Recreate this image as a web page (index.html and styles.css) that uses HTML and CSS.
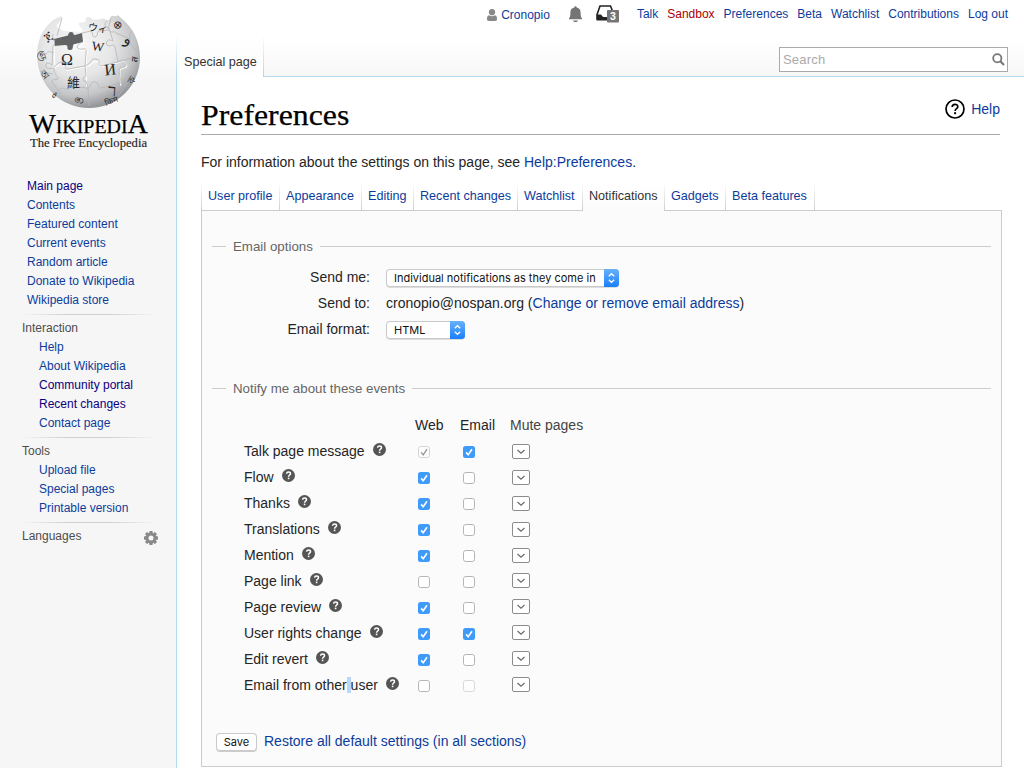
FILE: index.html
```html
<!DOCTYPE html>
<html lang="en">
<head>
<meta charset="utf-8">
<title>Preferences - Wikipedia</title>
<link rel="stylesheet" href="styles.css">
</head>
<body>
<svg class="defs" width="0" height="0" aria-hidden="true">
  <defs>
    <linearGradient id="blue" x1="0" y1="0" x2="0" y2="1"><stop offset="0" stop-color="#69b1fa"/><stop offset="1" stop-color="#1a7ffa"/></linearGradient>
    <symbol id="q" viewBox="0 0 13 13"><circle cx="6.5" cy="6.5" r="6.5" fill="#555"/><path d="M4.6 4.7C4.7 2.5 8.5 2.5 8.5 4.7C8.5 6 6.7 6 6.6 7.7" fill="none" stroke="#fff" stroke-width="1.5"/><rect x="5.8" y="8.6" width="1.6" height="1.6" fill="#fff"/></symbol>
    <symbol id="on" viewBox="0 0 12 12"><rect width="12" height="12" rx="2.5" fill="#3f9bf9"/><path d="M3.1 6.4L5.2 8.8L9 3.2" fill="none" stroke="#fff" stroke-width="1.6"/></symbol>
    <symbol id="off" viewBox="0 0 12 12"><rect x=".5" y=".5" width="11" height="11" rx="2.3" fill="#fff" stroke="#b5b5b5"/></symbol>
    <symbol id="dim" viewBox="0 0 12 12"><rect x=".5" y=".5" width="11" height="11" rx="2.3" fill="#fdfdfd" stroke="#d9d9d9"/></symbol>
    <symbol id="dimon" viewBox="0 0 12 12"><rect x=".5" y=".5" width="11" height="11" rx="2.3" fill="#fdfdfd" stroke="#d4d4d4"/><path d="M3.1 6.4L5.2 8.8L9 3.2" fill="none" stroke="#999" stroke-width="1.4"/></symbol>
    <symbol id="mute" viewBox="0 0 18 15"><rect x=".5" y=".5" width="17" height="14" rx="1.5" fill="#fff" stroke="#8c8c8c"/><path d="M5.5 6L9 9.2L12.5 6" fill="none" stroke="#666" stroke-width="1.1"/></symbol>
    <symbol id="updown" viewBox="0 0 15 18"><path d="M0 0H11.5A3.5 3.5 0 0 1 15 3.5V14.5A3.5 3.5 0 0 1 11.5 18H0Z" fill="url(#blue)"/><path d="M4.8 7.2L7.5 4.7L10.2 7.2M4.8 10.8L7.5 13.3L10.2 10.8" fill="none" stroke="#fff" stroke-width="1.3"/></symbol>
  </defs>
</svg>
<div class="page">
  <aside class="sidebar">
    <svg class="logo" width="176" height="160" viewBox="0 0 176 160">
      <defs>
        <radialGradient id="globe" cx=".4" cy=".32" r=".68"><stop offset="0" stop-color="#f8f8f8"/><stop offset=".5" stop-color="#e6e6e7"/><stop offset=".8" stop-color="#c5c6c8"/><stop offset="1" stop-color="#949699"/></radialGradient>
      </defs>
      <path d="M62 16C58 17 54 19 50 23C41 31 37 43 37 56C38 86 61 108 89 108C118 108 140 85 140 57C140 42 133 27 121 18L118 15C116 18 113 15 111 16L109 20C106 21 104 17 101 19L94 20C91 20 92 17 88 17C84 18 87 21 85 22L79 23C78 27 84 28 82 32L63 31C61 28 56 29 57 25C59 22 62 20 62 16Z" fill="url(#globe)"/>
      <path d="M54 39L66 36C70 36 67 32 71 32C75 32 72 35 75 35L82 33L83 42L75 44C71 44 75 50 70 50C65 50 70 45 65 45L54 46Z" fill="#626365"/>
      <g fill="none" stroke="#fff" stroke-width="1.1" transform="translate(.8 .8)"><path d="M53 39L54 66M83 42C78 45 76 49 80 50C84 49 87 47 86 53L85 66C94 63 91 60 96 61C102 61 96 66 101 66L118 62M54 67C58 64 60 62 63 65C67 69 64 71 69 69L85 66L86 87M118 62C123 58 126 61 126 65C125 69 120 66 119 70L120 85"/></g>
      <g fill="none" stroke="#b4b5b7" stroke-width=".8">
        <path d="M53 34C51 39 57 42 53 46L52 65C48 62 45 62 46 67C48 70 51 67 54 69C54 75 59 77 58 79C55 80 53 78 52 82L61 94M83 42C77 44 76 48 79 49C83 50 87 46 86 53L85 66C94 62 90 58 96 59C103 60 96 65 101 66L118 62M54 67C58 64 60 60 64 63C67 67 63 70 68 69L85 66L86 76C82 77 82 82 86 81L88 88C93 86 89 81 95 82C101 83 96 88 101 88L121 83M107 21C102 25 107 28 109 28L113 41C108 38 105 42 107 45C110 48 114 42 115 47L118 62C123 58 127 61 126 65C125 69 120 66 119 70L121 83C125 80 128 82 126 85L118 96M82 33L91 31C94 34 91 37 95 37C99 36 96 32 99 31L109 30C111 34 114 30 116 33L130 39M37 55C41 53 42 56 46 54C49 49 52 54 54 52M59 90C63 86 64 90 68 89C71 86 66 84 71 82C77 81 73 86 77 87L88 88L89 106M118 62C126 60 130 57 138 59M40 71L53 74M62 18L57 36M111 18L108 29M132 31C128 35 131 40 130 43L137 52M121 83L131 78"/>
      </g>
      <g class="glyphs">
        <text x="61" y="65" font-size="16">Ω</text><text x="92" y="51" font-size="13" transform="rotate(8 98 46)">W</text><text x="104.500" y="75" font-size="16" transform="rotate(-6 110 70)">И</text>
        <text class="cjk" x="67" y="87" font-size="13">維</text><text x="108" y="96" font-size="17" transform="rotate(5 112 90)">ר</text>
        <text x="88" y="31" font-size="10" transform="rotate(8 94 27)">ウィ</text><text x="44" y="40" font-size="12" transform="rotate(-35 48 36)">ጀ</text><text x="113" y="28" font-size="11" transform="rotate(38 117 25)">⊕</text><text x="124" y="44" font-size="15" transform="rotate(15 128 40)">و</text><text x="40" y="58" font-size="10" transform="rotate(75 44 54)">ஞ</text><text x="40" y="79" font-size="10" transform="rotate(48 45 75)">অ</text><text x="53" y="99" font-size="10" transform="rotate(35 57 95)">ಕಿ</text><text x="74" y="103" font-size="11" transform="rotate(8 80 99)">ဇာ</text><text x="131" y="63" font-size="10" transform="rotate(-80 134 59)">ส</text><text x="128" y="84" font-size="10" transform="rotate(-60 132 80)">ক</text><text x="105" y="104" font-size="8" transform="rotate(-20 110 101)">किम</text>
      </g>
      <text class="wordmark" x="29" y="133" textLength="119" lengthAdjust="spacingAndGlyphs"><tspan font-size="27">W</tspan><tspan font-size="19">IKIPEDI</tspan><tspan font-size="27">A</tspan></text>
      <text class="tagline" x="30" y="147" textLength="117" lengthAdjust="spacingAndGlyphs">The Free Encyclopedia</text>
    </svg>
    <nav class="portal main"><a class="visited">Main page</a><a>Contents</a><a>Featured content</a><a>Current events</a><a>Random article</a><a>Donate to Wikipedia</a><a>Wikipedia store</a></nav>
    <nav class="portal"><h3>Interaction</h3><a>Help</a><a>About Wikipedia</a><a class="visited">Community portal</a><a class="visited">Recent changes</a><a>Contact page</a></nav>
    <nav class="portal"><h3>Tools</h3><a>Upload file</a><a>Special pages</a><a>Printable version</a></nav>
    <nav class="portal"><h3>Languages
      <svg class="gear" width="14" height="14" viewBox="-7 -7 14 14"><circle r="3.9" fill="none" stroke="#888" stroke-width="2.8"/><g fill="#888"><path id="tooth" d="M-1.9 -4.8L-1.4 -7H1.4L1.9 -4.8ZM-1.9 4.8L-1.4 7H1.4L1.9 4.8Z"/><use href="#tooth" transform="rotate(45)"/><use href="#tooth" transform="rotate(90)"/><use href="#tooth" transform="rotate(135)"/></g></svg></h3></nav>
  </aside>
  <div class="body">
    <header class="header">
      <nav class="personal">
        <svg class="user" width="10" height="12" viewBox="0 0 10 12"><circle cx="5" cy="3.2" r="3.1" fill="#888"/><path d="M2 6.3C4 7.7 6 7.7 8 6.3C9.6 6.8 10 8 10 9.5C10 11.3 9.5 12 8 12H2C.5 12 0 11.3 0 9.5C0 8 .4 6.8 2 6.3Z" fill="#888"/></svg>
        <a class="name">Cronopio</a>
        <svg class="bell" width="13" height="17" viewBox="0 0 13 17"><path d="M5.3 1.5C5.3 -.2 7.7 -.2 7.7 1.5C10.6 2 11.6 4.2 11.6 6.5C11.6 10 12 11.3 13 12.2V13.3H0V12.2C1 11.3 1.400 10 1.400 6.5C1.400 4.2 2.400 2 5.300 1.500ZM4 14.400H9C8.500 16.500 4.500 16.500 4 14.400Z" fill="#757575"/></svg>
        <svg class="tray" width="24" height="18" viewBox="0 0 24 18"><path d="M.9 10L4 1H14.500L16.500 6" fill="none" stroke="#222" stroke-width="1.600"/><path d="M.2 9.500H4.500C5.500 9.500 6 11.500 7.500 12H12V15.500H1.500Q.2 15.500 .2 14Z" fill="#222"/><rect x="11" y="5" width="12" height="12.500" rx="1" fill="#757575"/><text x="17" y="14.900" text-anchor="middle" class="count">3</text></svg>
        <a>Talk</a><a class="new">Sandbox</a><a>Preferences</a><a>Beta</a><a>Watchlist</a><a>Contributions</a><a>Log out</a>
      </nav>
      <div class="headrow">
        <div class="viewtab">Special page</div>
        <div class="search"><span>Search</span><svg width="13" height="13" viewBox="0 0 13 13"><circle cx="5.300" cy="5.300" r="4.100" fill="none" stroke="#777" stroke-width="1.800"/><path d="M8.300 8.300L12 12" stroke="#777" stroke-width="2.200"/></svg></div>
      </div>
    </header>
    <main class="content">
      <div class="titlebar"><h1><span>Preferences</span></h1>
        <a class="help"><svg width="20" height="20" viewBox="0 0 20 20"><circle cx="10" cy="10" r="9" fill="none" stroke="#000" stroke-width="1.700"/><path d="M7.200 8C7.200 4.500 12.800 4.500 12.800 7.800C12.800 9.700 10.200 9.600 10.100 12" fill="none" stroke="#000" stroke-width="1.700"/><rect x="9.100" y="13.200" width="2" height="2"/></svg>Help</a></div>
      <p class="intro">For information about the settings on this page, see <a>Help:Preferences</a>.</p>
      <nav class="tabs"><a>User profile</a><a>Appearance</a><a>Editing</a><a>Recent changes</a><a>Watchlist</a><a class="selected">Notifications</a><a>Gadgets</a><a>Beta features</a></nav>
      <section class="panel">
        <h2 class="legend">Email options</h2>
        <div class="form">
          <label>Send me:</label><div><span class="select wide"><span class="val1">Individual notifications as they come in</span><svg width="15" height="18"><use href="#updown"/></svg></span></div>
          <label>Send to:</label><div><span class="mail">cronopio@nospan.org (<a>Change or remove email address</a>)</span></div>
          <label>Email format:</label><div><span class="select short"><span class="val2">HTML</span><svg width="15" height="18"><use href="#updown"/></svg></span></div>
        </div>
        <h2 class="legend events">Notify me about these events</h2>
        <div class="cols"><span></span><span>Web</span><span>Email</span><span class="soft">Mute pages</span></div>
        <div class="row"><span>Talk page message<svg class="q"><use href="#q"/></svg></span><svg class="cb"><use href="#dimon"/></svg><svg class="cb"><use href="#on"/></svg><svg class="mute"><use href="#mute"/></svg></div>
        <div class="row"><span>Flow<svg class="q"><use href="#q"/></svg></span><svg class="cb"><use href="#on"/></svg><svg class="cb"><use href="#off"/></svg><svg class="mute"><use href="#mute"/></svg></div>
        <div class="row"><span>Thanks<svg class="q"><use href="#q"/></svg></span><svg class="cb"><use href="#on"/></svg><svg class="cb"><use href="#off"/></svg><svg class="mute"><use href="#mute"/></svg></div>
        <div class="row"><span>Translations<svg class="q"><use href="#q"/></svg></span><svg class="cb"><use href="#on"/></svg><svg class="cb"><use href="#off"/></svg><svg class="mute"><use href="#mute"/></svg></div>
        <div class="row"><span>Mention<svg class="q"><use href="#q"/></svg></span><svg class="cb"><use href="#on"/></svg><svg class="cb"><use href="#off"/></svg><svg class="mute"><use href="#mute"/></svg></div>
        <div class="row up"><span>Page link<svg class="q"><use href="#q"/></svg></span><svg class="cb"><use href="#off"/></svg><svg class="cb"><use href="#off"/></svg><svg class="mute"><use href="#mute"/></svg></div>
        <div class="row up"><span>Page review<svg class="q"><use href="#q"/></svg></span><svg class="cb"><use href="#on"/></svg><svg class="cb"><use href="#off"/></svg><svg class="mute"><use href="#mute"/></svg></div>
        <div class="row up"><span>User rights change<svg class="q"><use href="#q"/></svg></span><svg class="cb"><use href="#on"/></svg><svg class="cb"><use href="#on"/></svg><svg class="mute"><use href="#mute"/></svg></div>
        <div class="row up"><span>Edit revert<svg class="q"><use href="#q"/></svg></span><svg class="cb"><use href="#on"/></svg><svg class="cb"><use href="#off"/></svg><svg class="mute"><use href="#mute"/></svg></div>
        <div class="row up"><span>Email from other<mark> </mark>user<svg class="q"><use href="#q"/></svg></span><svg class="cb"><use href="#off"/></svg><svg class="cb"><use href="#dim"/></svg><svg class="mute"><use href="#mute"/></svg></div>
        <div class="actions"><span class="save">Save</span><a>Restore all default settings (in all sections)</a></div>
      </section>
    </main>
  </div>
</div>
</body>
</html>
```
FILE: styles.css
```css
* { box-sizing: border-box; }
body { margin: 0; overflow: hidden; font-family: "Liberation Sans", Arial, sans-serif; font-size: 14px; color: #252525; background: #f6f6f6; }
svg { display: block; flex: none; }
.defs { position: absolute; }
a { color: #0b3c9c; white-space: nowrap; }
.page { display: flex; width: 1024px; height: 768px; background: linear-gradient(#fff 0, #fff 38px, #f6f6f6 80px); }
.sidebar { width: 177px; flex: none; border-right: 1px solid; border-image: linear-gradient(#a7d7f900 36px, #b3d9ef 76px) 1; font-size: 12px; }
.logo { width: 176px; height: 160px; }
.glyphs { font-family: "Liberation Serif", "DejaVu Sans", "Noto Sans CJK JP", serif; fill: #252525; }
.cjk { font-family: "Noto Sans CJK TC", sans-serif; }
.wordmark { font-family: "Liberation Serif", serif; fill: #000; stroke: #000; stroke-width: .25px; }
.tagline { font-family: "Liberation Serif", serif; font-size: 13px; fill: #222; stroke: #222; stroke-width: .15px; }
.portal { display: flex; flex-direction: column; line-height: 19px; margin-left: 22px; width: 134px; padding-top: 4px; }
.portal + .portal { margin-top: 4px; border-top: 1px solid; border-image: linear-gradient(to right, #d8d8d800, #d0d0d0 33%, #d0d0d0 66%, #d8d8d800) 1; }
.portal a { padding-left: 17px; }
.portal.main { padding-top: 17px; }
.portal.main a { padding-left: 5px; }
.portal h3 { display: flex; justify-content: space-between; align-items: center; margin: 0 -3px 0 0; font-size: 12px; font-weight: normal; color: #4d4d4d; }
.gear { margin: 2px 1px 0 0; }
.visited { color: #0b0080; }
.body { flex: 1; min-width: 0; display: flex; flex-direction: column; }
.header { height: 77px; display: flex; flex-direction: column; justify-content: space-between; }
.personal { height: 28px; display: flex; align-items: center; justify-content: flex-end; gap: 9px; padding-right: 16px; font-size: 12px; }
.user { margin: 1px -5px 0 0; }
.name { padding-top: 2px; }
.bell { margin: 0 5px 0 10px; }
.tray { margin-right: 8px; }
.count { font: bold 10.5px "Liberation Sans", sans-serif; fill: #fff; }
.new { color: #a00; }
.headrow { display: flex; height: 41px; }
.viewtab { width: 87px; flex: none; padding: 18px 0 0 7px; line-height: 16px; font-size: 12.6px; color: #333; background: linear-gradient(#fff0, #fff 40px); border-right: 1px solid; border-image: linear-gradient(#a7d7f900, #a9d5ee) 1; white-space: nowrap; }
.headrow::after { content: ""; flex: none; width: 16px; border-bottom: 1px solid #b3d9ef; }
.search { flex: 1; padding-left: 515px; border-bottom: 1px solid #b3d9ef; color: #aaa; font-size: 13px; position: relative; display: flex; }
.search::before { content: ""; position: absolute; inset: 11px 0 4px 515px; border: 1px solid #aaa; background: #fff; }
.search span { position: relative; flex: 1; padding: 15px 0 0 4px; line-height: 17px; letter-spacing: .2px; }
.search svg { position: relative; margin: 17px 3px 0 0; }
.content { flex: 1; background: #fff; padding: 20px 24px 0; }
.titlebar { height: 38px; display: flex; justify-content: space-between; border-bottom: 1px solid #aaa; }
h1 { margin: 0; font: 30px/36px "Liberation Serif", serif; color: #000; }
h1 span { display: inline-block; transform: scaleX(1.06); transform-origin: left; -webkit-text-stroke: .25px #000; }
.help { display: flex; align-items: center; height: 24px; gap: 6px; }
.intro { margin: 17px 0 0; line-height: 20px; height: 32px; white-space: nowrap; }
.tabs { display: grid; grid-template-columns: 79px 82px 52px 104px 65px 82px 61px 89px; height: 27px; font-size: 12.6px; width: 614px; position: relative; margin-bottom: -1px; }
.tabs a { line-height: 24px; padding-left: 6px; border-right: 1px solid; border-bottom: 1px solid; border-image: linear-gradient(#ccc0, #ccc) 1; }
.tabs a:first-child { border-left: 1px solid; }
.tabs .selected { color: #333; background: linear-gradient(#fff, #fbfbfb); border-bottom: 0; }
.panel { width: 801px; height: 557px; border: 1px solid #ccc; background: #fbfbfb; padding: 26px 10px 0; }
.legend { display: flex; align-items: center; gap: 7px; margin: 0; font-size: 13.3px; font-weight: normal; line-height: 20px; height: 20px; color: #666; white-space: nowrap; }
.legend::before { content: ""; width: 14px; height: 1px; margin-bottom: 2px; background: #ccc; }
.legend::after { content: ""; flex: 1; height: 1px; margin-bottom: 2px; background: #ccc; }
.form { display: grid; grid-template-columns: 158px 1fr; grid-auto-rows: 26px; column-gap: 16px; margin-top: 8px; line-height: 25px; }
.form label { text-align: right; }
.select { display: flex; justify-content: space-between; align-items: center; height: 18px; margin-top: 4px; line-height: 17px; border-radius: 4px; background: #fff; box-shadow: inset 0 0 0 1px #c9c9c9, 0 1px 0 #ddd; color: #111; font-family: Inter, sans-serif; font-size: 11px; padding-left: 8px; white-space: nowrap; }
.wide { width: 233px; }
.short { width: 79px; }
.events { margin-top: 36px; }
.cols, .row { display: grid; color: #252525; white-space: nowrap; }
.cols { grid-template-columns: 171px 45px 50px 100px; padding-left: 32px; margin-top: 17px; height: 22px; line-height: 18px; }
.soft { color: #444; }
.row { grid-template-columns: 174px 45px 49px 18px; padding-left: 32px; height: 26px; align-items: center; }
.row > span { display: flex; align-items: center; white-space: pre; }
.q { width: 13px; height: 13px; margin: -3px 0 0 8px; }
.cb { width: 12px; height: 12px; margin-top: 2px; }
.mute { width: 18px; height: 15px; margin-top: 1px; }
.up .mute { margin-top: -1px; }
mark { background: #b9d7fb; color: inherit; }
.actions { display: flex; align-items: center; gap: 7px; margin: 33px 0 0 4px; height: 20px; }
.save { width: 41px; height: 18px; margin-top: 2px; border-radius: 4px; background: #fff; box-shadow: inset 0 0 0 1px #c9c9c9, 0 1px 0 #ccc; font: 11px/18px Inter, sans-serif; text-align: center; color: #111; }
```
